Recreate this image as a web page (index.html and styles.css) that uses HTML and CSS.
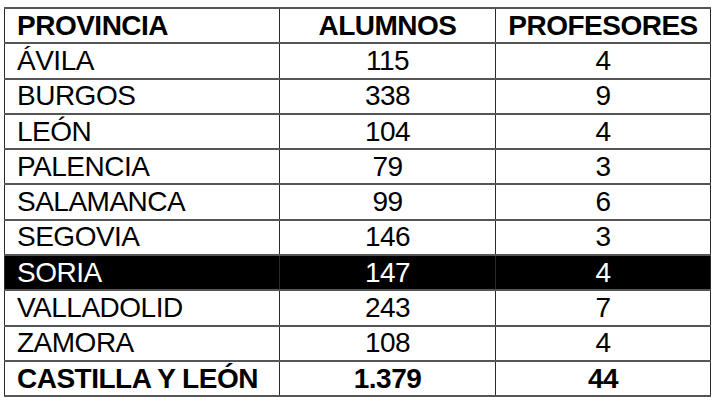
FILE: index.html
```html
<!DOCTYPE html>
<html lang="es">
<head>
<meta charset="utf-8">
<title>Provincias</title>
<link rel="stylesheet" href="styles.css">
</head>
<body>
<table class="data">
  <colgroup>
    <col class="c-prov">
    <col class="c-alum">
    <col class="c-prof">
  </colgroup>
  <thead>
    <tr class="head"><th class="name">PROVINCIA</th><th>ALUMNOS</th><th>PROFESORES</th></tr>
  </thead>
  <tbody>
    <tr><td class="name">ÁVILA</td><td>115</td><td>4</td></tr>
    <tr><td class="name">BURGOS</td><td>338</td><td>9</td></tr>
    <tr><td class="name">LEÓN</td><td>104</td><td>4</td></tr>
    <tr><td class="name">PALENCIA</td><td>79</td><td>3</td></tr>
    <tr><td class="name">SALAMANCA</td><td>99</td><td>6</td></tr>
    <tr><td class="name">SEGOVIA</td><td>146</td><td>3</td></tr>
    <tr class="hl"><td class="name">SORIA</td><td>147</td><td>4</td></tr>
    <tr><td class="name">VALLADOLID</td><td>243</td><td>7</td></tr>
    <tr><td class="name">ZAMORA</td><td>108</td><td>4</td></tr>
    <tr class="total"><td class="name">CASTILLA Y LEÓN</td><td>1.379</td><td>44</td></tr>
  </tbody>
</table>
</body>
</html>
```
FILE: styles.css
```css
html, body {
  margin: 0;
  padding: 0;
  background: #ffffff;
}

body {
  padding: 7px 0 0 4px;
  font-family: "Liberation Sans", Arial, sans-serif;
  color: #000;
}

.data {
  border-collapse: collapse;
  table-layout: fixed;
  width: 706px;
  font-size: 28px;
  letter-spacing: -0.5px;
}

.c-prov { width: 275px; }
.c-alum { width: 216px; }
.c-prof { width: 215px; }

.data th,
.data td {
  height: 33.3px;
  padding: 0;
  text-align: center;
  vertical-align: middle;
  line-height: 30px;
  border-left: 1px solid #2a2a2a;
  border-right: 1px solid #2a2a2a;
  border-top: 2px solid #555;
  border-bottom: 2px solid #555;
}

.data th {
  font-weight: bold;
}

.data .name {
  text-align: left;
  padding-left: 12px;
}

.hl td {
  background: #000;
  color: #fff;
}

.total td {
  font-weight: bold;
}
```
